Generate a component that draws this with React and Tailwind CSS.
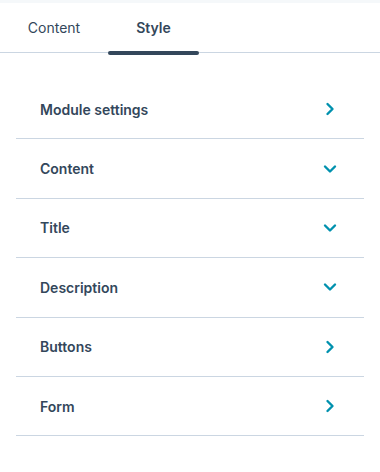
const sections = [
  { label: 'Module settings', open: false },
  { label: 'Content', open: true },
  { label: 'Title', open: true },
  { label: 'Description', open: true },
  { label: 'Buttons', open: false },
  { label: 'Form', open: false },
];

function Chevron({ down }) {
  return (
    <svg width="16" height="16" viewBox="0 0 16 16" fill="none">
      {down ? (
        <polyline points="3,5.5 8,10.5 13,5.5" stroke="#0091ae" strokeWidth="2.4" strokeLinecap="round" strokeLinejoin="round" />
      ) : (
        <polyline points="5.5,3 10.5,8 5.5,13" stroke="#0091ae" strokeWidth="2.4" strokeLinecap="round" strokeLinejoin="round" />
      )}
    </svg>
  );
}

export default function App() {
  return (
    <div className="w-[380px] h-[472px] bg-white text-[#33475b]" style={{ fontFamily: 'Inter, "Noto Sans", sans-serif' }}>
      <div className="h-[3px] bg-[#f5f8fa]" />
      <div className="flex h-[50px] border-b border-[#cbd6e2]">
        <button className="w-[108px] text-[14px] font-normal text-[#33475b]">Content</button>
        <button className="relative w-[91px] text-[14px] font-semibold text-[#33475b]">
          Style
          <span className="absolute left-0 right-0 -bottom-[3px] h-[4px] rounded-full bg-[#33475b]" />
        </button>
      </div>
      <div className="pt-[27px] mx-4">
        {sections.map((s) => (
          <div
            key={s.label}
            className="flex items-center justify-between h-[59.4px] pl-6 pr-[26px] border-b border-[#cbd6e2]"
          >
            <span className="text-[14px] font-semibold">{s.label}</span>
            <Chevron down={s.open} />
          </div>
        ))}
      </div>
    </div>
  );
}
